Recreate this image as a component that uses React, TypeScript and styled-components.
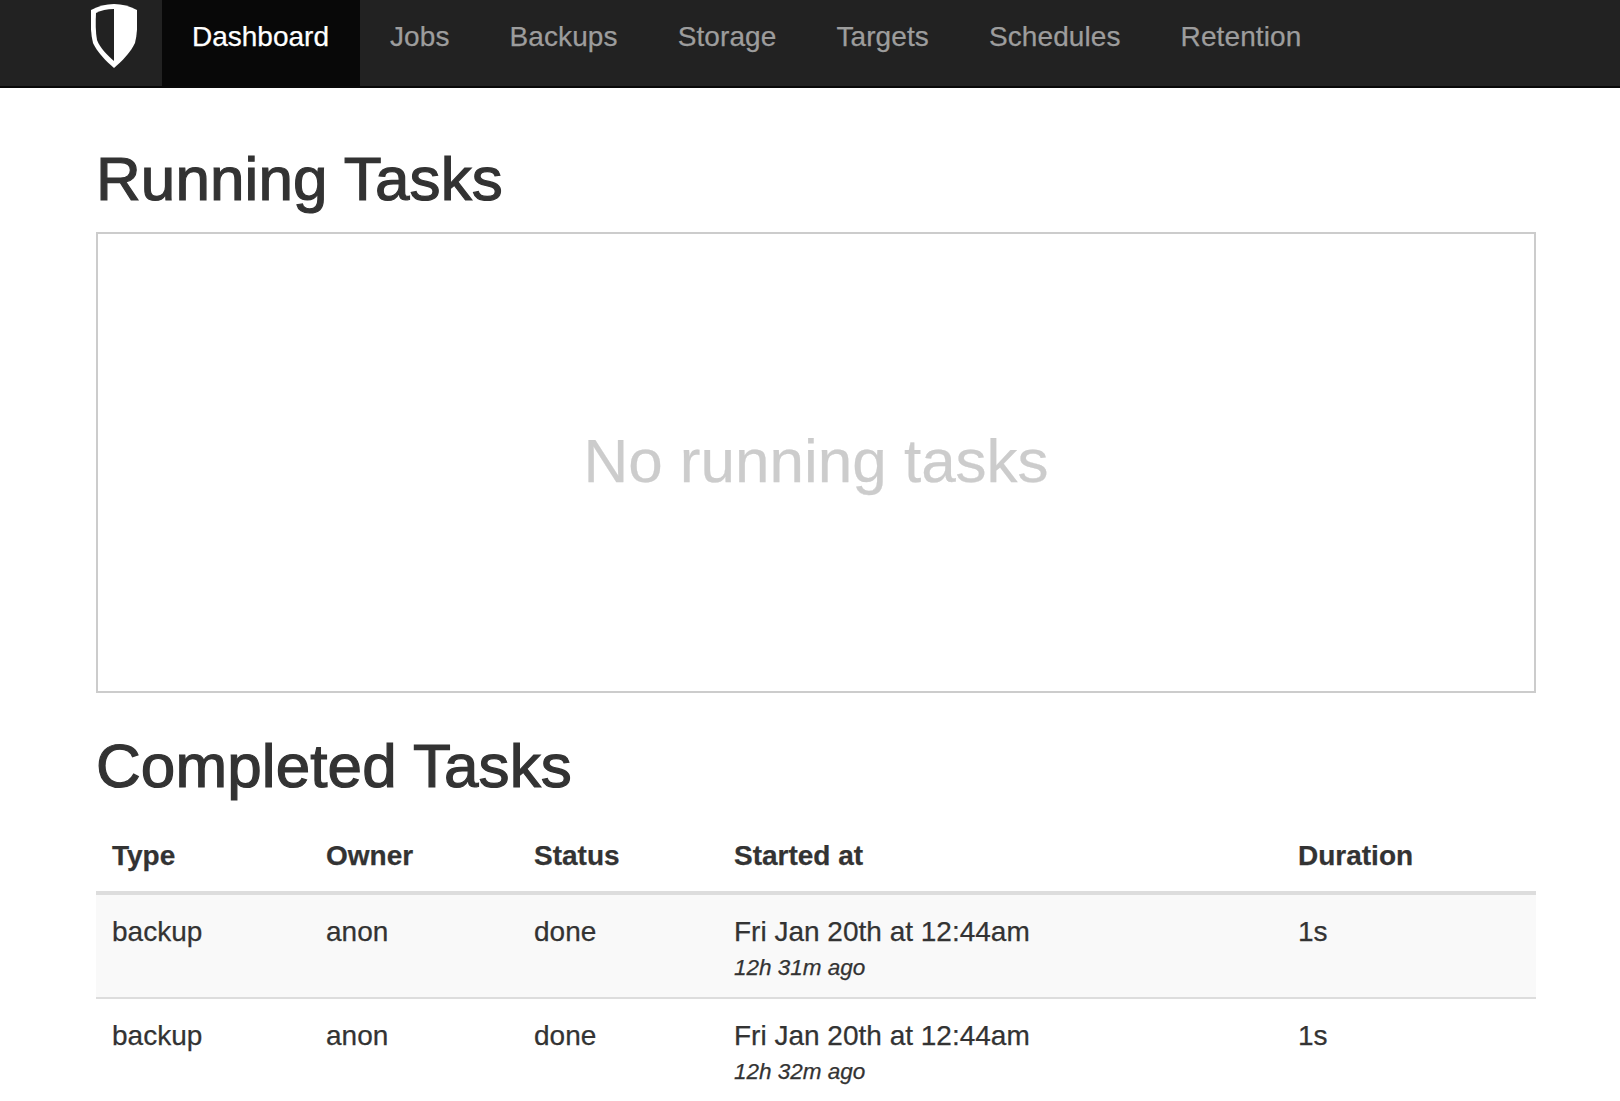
import React from 'react';
import styled, { createGlobalStyle } from 'styled-components';

const GlobalStyle = createGlobalStyle`
  html, body {
    margin: 0;
    background: #fff;
    color: #333;
    font-family: "Liberation Sans", Arial, sans-serif;
    font-size: 28px;
    line-height: 40px;
    -webkit-text-stroke: 0.25px;
  }
`;

const Navbar = styled.nav`
  display: flex;
  height: 86px;
  padding-left: 72px;
  background: #222;
  border-bottom: 2px solid #080808;
`;

const Brand = styled.a`
  display: flex;
  width: 90px;
  padding: 4px 0 0 19px;
  box-sizing: border-box;
`;

const NavItem = styled.a<{ $active?: boolean }>`
  padding: 0 ${p => (p.$active ? '31px' : '30px')} 0 30px;
  line-height: 73px;
  letter-spacing: ${p => (p.$active ? '0' : '0.1px')};
  color: ${p => (p.$active ? '#fff' : '#9d9d9d')};
  background: ${p => (p.$active ? '#080808' : 'transparent')};
`;

const Content = styled.main`
  display: flex;
  flex-direction: column;
  padding: 58px 84px 0 96px;
`;

const Heading = styled.h1`
  margin: 0 0 20px;
  font-size: 62px;
  font-weight: 400;
  line-height: 66px;
  letter-spacing: 0.1px;
  color: #333;
  -webkit-text-stroke: 1.2px;
`;

const EmptyBox = styled.div`
  display: flex;
  height: 453px;
  padding-bottom: 4px;
  margin-bottom: 40px;
  align-items: center;
  justify-content: center;
  border: 2px solid #ccc;
  font-size: 62px;
  color: #ccc;
`;

const Table = styled.table`
  width: 100%;
  margin-top: 1px;
  table-layout: fixed;
  border-collapse: collapse;
`;

const HeadCell = styled.th<{ $width: number }>`
  box-sizing: border-box;
  width: ${p => p.$width}px;
  padding: 16px 16px 15px;
  text-align: left;
  font-weight: 700;
  border-bottom: 4px solid #ddd;
`;

const Row = styled.tr<{ $striped?: boolean }>`
  background: ${p => (p.$striped ? '#f9f9f9' : '#fff')};
  border-bottom: 2px solid #ddd;
`;

const Cell = styled.td`
  padding: 17px 16px 13px;
  vertical-align: top;
`;

const Ago = styled.div`
  font-size: 22.5px;
  font-style: italic;
  line-height: 32px;
`;

function ShieldLogo() {
  return (
    <svg width="46" height="64" viewBox="0 0 46 64">
      <path
        d="M23 0C31 0 39 2 46 6C46.500 18 46.500 29 44 39C40 48 31 57 23 64C15 57 6 48 2 39C-.5 29 -.5 18 0 6C7 2 15 0 23 0Z"
        fill="#fff"
      />
      <path
        d="M23 5V57C16 51 9 44 6 36C4.500 28 4.500 18 5 9C10 6.500 16 5 23 5Z"
        fill="#222"
      />
    </svg>
  );
}

const navItems = ['Dashboard', 'Jobs', 'Backups', 'Storage', 'Targets', 'Schedules', 'Retention'];

const tasks = [
  { type: 'backup', owner: 'anon', status: 'done', started: 'Fri Jan 20th at 12:44am', ago: '12h 31m ago', duration: '1s' },
  { type: 'backup', owner: 'anon', status: 'done', started: 'Fri Jan 20th at 12:44am', ago: '12h 32m ago', duration: '1s' },
];

export default function App() {
  return (
    <>
      <GlobalStyle />
      <Navbar>
        <Brand>
          <ShieldLogo />
        </Brand>
        {navItems.map((name, i) => (
          <NavItem key={name} $active={i === 0}>{name}</NavItem>
        ))}
      </Navbar>
      <Content>
        <Heading>Running Tasks</Heading>
        <EmptyBox>No running tasks</EmptyBox>
        <Heading>Completed Tasks</Heading>
        <Table>
          <thead>
            <tr>
              <HeadCell $width={214}>Type</HeadCell>
              <HeadCell $width={208}>Owner</HeadCell>
              <HeadCell $width={200}>Status</HeadCell>
              <HeadCell $width={564}>Started at</HeadCell>
              <HeadCell $width={254}>Duration</HeadCell>
            </tr>
          </thead>
          <tbody>
            {tasks.map((t, i) => (
              <Row key={i} $striped={i % 2 === 0}>
                <Cell>{t.type}</Cell>
                <Cell>{t.owner}</Cell>
                <Cell>{t.status}</Cell>
                <Cell>
                  {t.started}
                  <Ago>{t.ago}</Ago>
                </Cell>
                <Cell>{t.duration}</Cell>
              </Row>
            ))}
          </tbody>
        </Table>
      </Content>
    </>
  );
}
